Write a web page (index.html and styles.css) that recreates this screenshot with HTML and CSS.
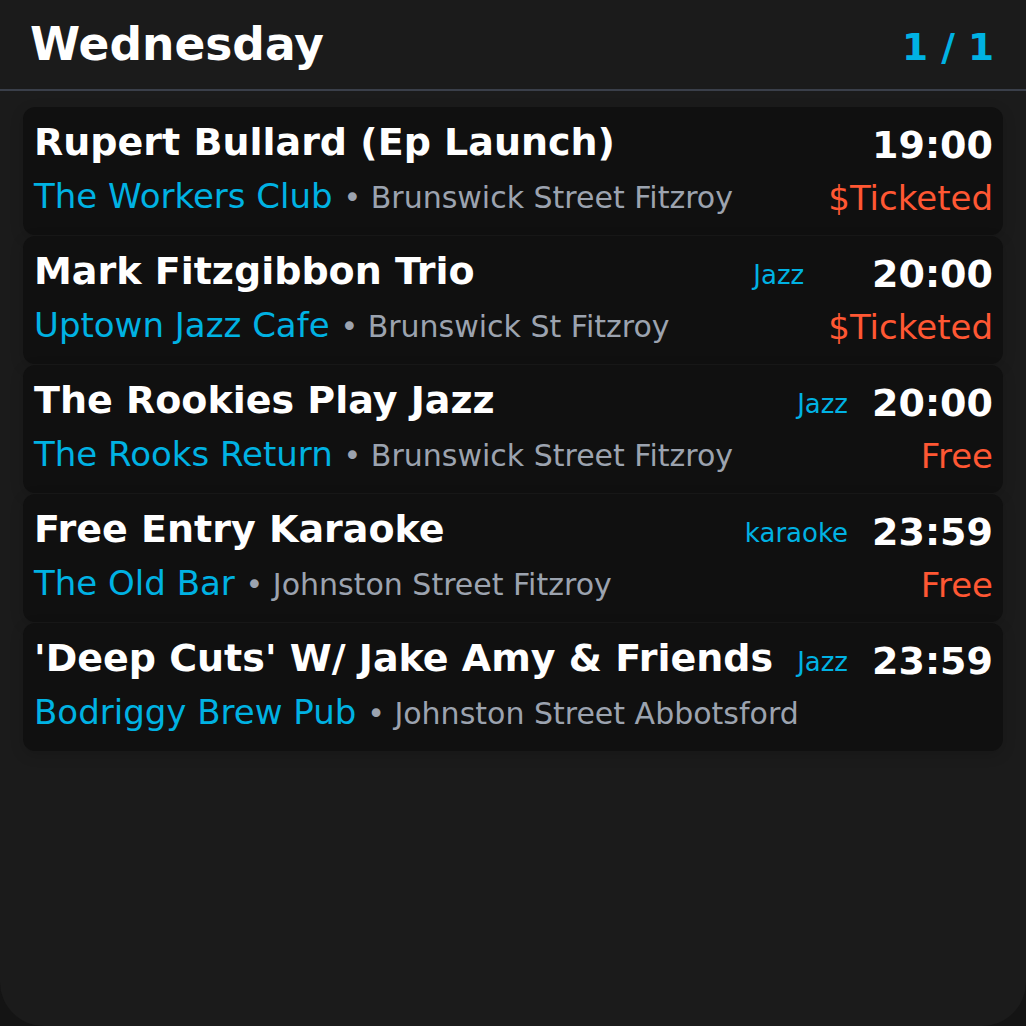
FILE: index.html
```html
<!DOCTYPE html>
<html lang="en">
<head>
    <meta charset="UTF-8">
    <meta name="viewport" content="width=device-width, initial-scale=1.0">
    <title>Gigs - Wednesday</title>
    <link rel="stylesheet" href="styles.css">
</head>
<body>

<div class="screen">
    <div class="day-header">
        <h1>Wednesday</h1>
        <span class="pager">1 / 1</span>
    </div>

    <div class="gig-list">
        <div class="gig">
            <div class="gig-title">Rupert Bullard (Ep Launch)</div>
            <div class="gig-time">19:00</div>
            <div class="gig-place"><span class="venue">The Workers Club</span> <span class="address">• Brunswick Street Fitzroy</span></div>
            <div class="gig-price">$Ticketed</div>
        </div>

        <div class="gig">
            <div class="gig-title">Mark Fitzgibbon Trio</div>
            <div class="gig-genre">Jazz</div>
            <div class="gig-time">20:00</div>
            <div class="gig-place"><span class="venue">Uptown Jazz Cafe</span> <span class="address">• Brunswick St Fitzroy</span></div>
            <div class="gig-price">$Ticketed</div>
        </div>

        <div class="gig">
            <div class="gig-title">The Rookies Play Jazz</div>
            <div class="gig-genre">Jazz</div>
            <div class="gig-time">20:00</div>
            <div class="gig-place"><span class="venue">The Rooks Return</span> <span class="address">• Brunswick Street Fitzroy</span></div>
            <div class="gig-price">Free</div>
        </div>

        <div class="gig">
            <div class="gig-title">Free Entry Karaoke</div>
            <div class="gig-genre">karaoke</div>
            <div class="gig-time">23:59</div>
            <div class="gig-place"><span class="venue">The Old Bar</span> <span class="address">• Johnston Street Fitzroy</span></div>
            <div class="gig-price">Free</div>
        </div>

        <div class="gig">
            <div class="gig-title">'Deep Cuts' W/ Jake Amy &amp; Friends</div>
            <div class="gig-genre">Jazz</div>
            <div class="gig-time">23:59</div>
            <div class="gig-place"><span class="venue">Bodriggy Brew Pub</span> <span class="address">• Johnston Street Abbotsford</span></div>
            <div class="gig-price"></div>
        </div>
    </div>
</div>

</body>
</html>
```

FILE: styles.css
```css
/* page */
html, body {
    margin: 0;
    padding: 0;
    background-color: #141414;
}
body {
    font-family: "DejaVu Sans", Verdana, sans-serif;
    color: #fff;
}
.screen {
    height: 1026px;
    box-sizing: border-box;
    background-color: #1b1b1b;
    border-radius: 0 0 44px 44px;
    overflow: hidden;
}

/* header */
.day-header {
    display: flex;
    justify-content: space-between;
    align-items: baseline;
    padding: 14px 32px 0 30px;
    height: 75px;
    border-bottom: 2px solid #3a3f4a;
}
.day-header h1 {
    margin: 0;
    font-size: 45.5px;
    font-weight: bold;
    line-height: 62px;
}
.pager {
    font-size: 37.5px;
    font-weight: bold;
    color: #00b2e3;
}

/* gigs */
.gig-list {
    padding: 16px 23px 0 23px;
}
.gig {
    display: grid;
    grid-template-columns: 1fr auto auto;
    grid-template-rows: 46px 40px;
    align-items: baseline;
    column-gap: 24px;
    row-gap: 11px;
    padding: 12px 10px 19px 11px;
    background-color: #101010;
    border-radius: 12px;
    box-shadow: 0 4px 14px rgba(0, 0, 0, 0.15);
    white-space: nowrap;
}
.gig + .gig {
    margin-top: 1px;
}
.gig-title {
    font-size: 38px;
    font-weight: bold;
    line-height: 46px;
}
.gig-genre {
    font-size: 26px;
    line-height: 30px;
    color: #00b2e3;
}

/* right column sits a little lower than the left text */
.gig-time {
    grid-column: 3;
    grid-row: 1;
    align-self: start;
    padding-top: 3px;
    font-size: 38px;
    font-weight: bold;
    line-height: 46px;
    text-align: right;
}
.gig-place {
    grid-column: 1 / 3;
    grid-row: 2;
    font-size: 34px;
    line-height: 40px;
}
.venue {
    color: #00b2e3;
}
.address {
    font-size: 30px;
    color: #9ca3af;
}
.gig-price {
    grid-column: 3;
    grid-row: 2;
    align-self: start;
    padding-top: 2px;
    font-size: 34px;
    line-height: 40px;
    text-align: right;
    color: #ff5733;
}
```
